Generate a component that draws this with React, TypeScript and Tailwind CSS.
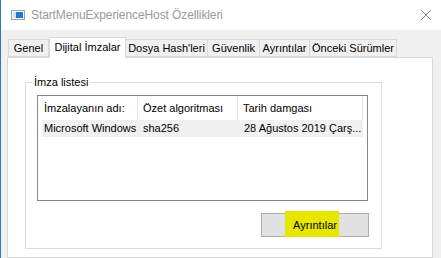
import React from "react";

const tabs = [
  { label: "Genel", w: "w-[41px]" },
  { label: "Dijital İmzalar", w: "w-[77px]", active: true },
  { label: "Dosya Hash'leri", w: "w-[83px]" },
  { label: "Güvenlik", w: "w-[53px]" },
  { label: "Ayrıntılar", w: "w-[51px]" },
  { label: "Önceki Sürümler", w: "w-[88px]" },
];

function WindowIcon() {
  return (
    <svg width="14" height="10" viewBox="0 0 14 10" className="shrink-0">
      <rect x="0.5" y="0.5" width="13" height="9" fill="#ffffff" stroke="#a0a0a0" />
      <rect x="2" y="2" width="10" height="6" fill="#1e78d7" />
      <rect x="2" y="2" width="3" height="6" fill="#cfe3f7" />
    </svg>
  );
}

function CloseIcon() {
  return (
    <svg width="12" height="12" viewBox="0 0 12 12">
      <path d="M1 1 L11 11 M11 1 L1 11" stroke="#8a8a8a" strokeWidth="1" />
    </svg>
  );
}

export default function App() {
  return (
    <div
      className="w-[441px] h-[258px] overflow-hidden border-l border-[#2b79b9] bg-[#f0f0f0] text-[11px] text-black flex flex-col"
      style={{ fontFamily: '"Liberation Sans", Arial, sans-serif' }}
    >
      {/* title bar */}
      <div className="h-[30px] bg-white flex items-center pl-[10px] pr-[8px] shrink-0">
        <WindowIcon />
        <span className="ml-[6px] text-[12px] text-[#9a9a9a] tracking-[-0.1px]">
          StartMenuExperienceHost Özellikleri
        </span>
        <div className="ml-auto mr-[1px]">
          <CloseIcon />
        </div>
      </div>

      <div className="pl-[6px] pt-[7px] flex-1 flex flex-col">
        {/* tabs */}
        <div className="flex items-end h-[20px] pl-[1px] relative z-10">
          {tabs.map((t) =>
            t.active ? (
              <div
                key={t.label}
                className={`${t.w} h-[21px] -mb-px bg-white border border-b-0 border-[#d9d9d9] flex items-center justify-center pb-[2px]`}
              >
                {t.label}
              </div>
            ) : (
              <div
                key={t.label}
                className={`${t.w} h-[18px] bg-[#f0f0f0] border border-[#d9d9d9] -ml-px first:ml-0 flex items-center justify-center`}
              >
                {t.label}
              </div>
            )
          )}
        </div>

        {/* tab page */}
        <div className="w-[426px] flex-1 bg-white border border-[#d9d9d9] pl-[17px] pt-[24px]">
          <div className="relative w-[357px] h-[167px] border border-[#dcdcdc] pl-[11px] pt-[12px]">
            <span className="absolute left-[6px] -top-[8px] bg-white px-[2px] leading-[14px]">
              İmza listesi
            </span>

            <div className="w-[331px] h-[106px] border border-[#828790] bg-white">
              <div className="flex h-[24px] items-center">
                <div className="w-[100px] h-full pl-[6px] flex items-center border-r border-[#e5e5e5]">
                  İmzalayanın adı:
                </div>
                <div className="w-[100px] h-full pl-[5px] flex items-center border-r border-[#e5e5e5]">
                  Özet algoritması
                </div>
                <div className="w-[125px] h-full pl-[5px] flex items-center border-r border-[#e5e5e5]">
                  Tarih damgası
                </div>
              </div>
              <div className="ml-[4px] w-[321px] h-[17px] bg-[#f0f0f0] flex items-center">
                <div className="w-[96px] pl-[2px] whitespace-nowrap">Microsoft Windows</div>
                <div className="w-[100px] pl-[5px]">sha256</div>
                <div className="w-[125px] pl-[6px] whitespace-nowrap">28 Ağustos 2019 Çarş...</div>
              </div>
            </div>

            <div className="flex justify-end pr-[12px] mt-[12px]">
              <div className="relative w-[108px] h-[24px] bg-[#e1e1e1] border border-[#adadad] flex items-center justify-center">
                <span className="absolute left-[23px] -top-[3px] w-[54px] h-[26px] bg-[#e6e600]" />
                <span className="relative">Ayrıntılar</span>
              </div>
            </div>
          </div>
        </div>
      </div>
    </div>
  );
}
